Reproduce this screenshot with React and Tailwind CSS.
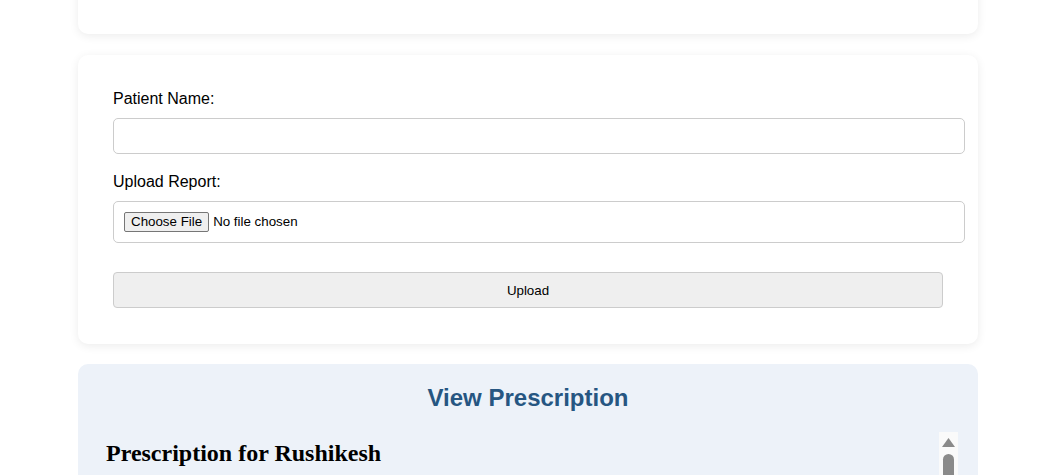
export default function App() {
  return (
    <div className="h-screen overflow-hidden bg-white font-['Liberation_Sans',Arial,sans-serif] text-black">
      <div className="mx-auto w-[900px]">
        {/* previous card, scrolled mostly out of view */}
        <div className="-mt-[66px] h-[100px] rounded-[10px] bg-white shadow-[0_2px_10px_rgba(0,0,0,0.08)]" />

        {/* upload form */}
        <div className="mt-[21px] rounded-[10px] bg-white px-[35px] pb-[36px] pt-[35px] shadow-[0_2px_10px_rgba(0,0,0,0.08)]">
          <form onSubmit={(e) => e.preventDefault()}>
            <label className="mb-[10px] block text-base leading-[18px]">Patient Name:</label>
            <input
              type="text"
              className="mb-[19px] block h-[36px] w-[852px] rounded-[5px] border border-[#ccc] px-[10px] text-base outline-none"
            />
            <label className="mb-[10px] block text-base leading-[18px]">Upload Report:</label>
            <input
              type="file"
              className="mb-[29px] block h-[42px] w-[852px] rounded-[5px] border border-[#ccc] px-[10px] py-[10px] text-[13.33px] leading-[16px] file:mr-[4px] file:rounded-[2px] file:border file:border-[#767676] file:bg-[#efefef] file:px-[6px] file:py-[1px] file:text-[13.33px]"
            />
            <button
              type="submit"
              className="block h-[36px] w-full rounded-[4px] border border-[#ccc] bg-[#efefef] pt-[1px] text-[13.33px]"
            >
              Upload
            </button>
          </form>
        </div>

        {/* prescription viewer */}
        <div className="mt-[20px] rounded-[10px] bg-[#edf2f9] p-[20px]">
          <h2 className="text-center text-2xl font-bold leading-[27px] text-[#265682]">View Prescription</h2>
          <div className="relative mt-[21px]">
            <div className="h-[400px] overflow-hidden pr-[19px]">
              <div className="p-[8px] font-['Liberation_Serif','Times_New_Roman',serif]">
                <h3 className="text-2xl font-bold leading-[27px]">Prescription for Rushikesh</h3>
              </div>
            </div>
            {/* scrollbar */}
            <div className="absolute right-0 top-0 flex h-[400px] w-[19px] flex-col items-center bg-[#fafafa] pt-[6px]">
              <svg width="13" height="9" viewBox="0 0 13 9" className="block">
                <path d="M6.5 0 L13 9 L0 9 Z" fill="#8a8a8a" />
              </svg>
              <div className="mt-[7px] h-[120px] w-[11px] rounded-t-full bg-[#8a8a8a]" />
            </div>
          </div>
        </div>
      </div>
    </div>
  );
}
